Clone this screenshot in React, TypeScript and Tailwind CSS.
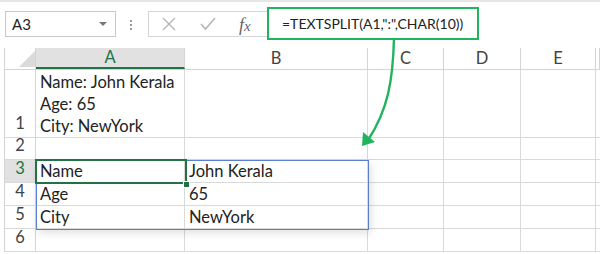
import React from 'react';

const COLS = [
  { id: 'A', w: 149 },
  { id: 'B', w: 183 },
  { id: 'C', w: 76 },
  { id: 'D', w: 77 },
  { id: 'E', w: 75 },
  { id: '', w: 4 },
];

const ROWS: { n: string; h: number; a?: React.ReactNode; b?: string }[] = [
  {
    n: '1',
    h: 68,
    a: (
      <div className="flex flex-col leading-[22px]">
        <span>Name: John Kerala</span>
        <span>Age: 65</span>
        <span>City: NewYork</span>
      </div>
    ),
  },
  { n: '2', h: 22 },
  { n: '3', h: 23, a: 'Name', b: 'John Kerala' },
  { n: '4', h: 23, a: 'Age', b: '65' },
  { n: '5', h: 23, a: 'City', b: 'NewYork' },
  { n: '6', h: 23 },
];

const cellFont = { fontFamily: 'Lato, "Open Sans", sans-serif' };

function FormulaBar() {
  return (
    <div className="relative h-[48px] border-t-[2px] border-[#e6e6e6] bg-white">
      {/* name box */}
      <div className="absolute left-[5px] top-[9px] w-[111px] h-[26px] border border-[#c8c8c8] flex items-center pl-[6px] text-[15px] text-[#222]" style={cellFont}>
        A3
        <span className="absolute right-[8px] top-[10px] w-0 h-0 border-l-[4px] border-r-[4px] border-t-[4px] border-l-transparent border-r-transparent border-t-[#777]" />
      </div>
      {/* dots */}
      <div className="absolute left-[130px] top-[18px] flex flex-col gap-[2px]">
        <span className="w-[2px] h-[2px] bg-[#999]" />
        <span className="w-[2px] h-[2px] bg-[#999]" />
        <span className="w-[2px] h-[2px] bg-[#999]" />
      </div>
      {/* icons box */}
      <div className="absolute left-[148px] top-[9px] w-[130px] h-[26px] border border-[#d6d6d6] flex items-center">
        <svg className="absolute left-[13px] top-[5px]" width="14" height="14" viewBox="0 0 14 14">
          <path d="M1 1 L13 13 M13 1 L1 13" stroke="#b4b4b4" strokeWidth="1.3" fill="none" />
        </svg>
        <svg className="absolute left-[51px] top-[5px]" width="16" height="14" viewBox="0 0 16 14">
          <path d="M1 7 L5.5 12 L15 1" stroke="#b4b4b4" strokeWidth="1.5" fill="none" />
        </svg>
        <span className="absolute left-[90px] top-0 text-[18px] italic text-[#666]" style={{ fontFamily: '"Liberation Serif", serif' }}>
          f<span className="text-[15px]">x</span>
        </span>
      </div>
      {/* formula text */}
      <div className="absolute left-[267px] top-[5px] w-[212px] h-[33px] border-[2px] border-[#22b35e] bg-white flex items-center pl-[13px] text-[14px] text-[#222]" style={cellFont}>
        =TEXTSPLIT(A1,":",CHAR(10))
      </div>
    </div>
  );
}

function Grid() {
  return (
    <div className="ml-[4px] border-l border-[#d4d4d4]" style={cellFont}>
      {/* header row */}
      <div className="flex h-[22px] border-b border-[#d4d4d4]">
        <div className="w-[31px] shrink-0 relative border-r border-[#d4d4d4]">
          <svg className="absolute left-[14px] top-[3px]" width="16" height="16" viewBox="0 0 16 16">
            <polygon points="16,0 16,16 0,16" fill="#dadada" />
          </svg>
        </div>
        {COLS.map((c) => (
          <div
            key={c.id + c.w}
            className={`shrink-0 flex items-center justify-center text-[16.5px] border-r border-[#d4d4d4] ${
              c.id === 'A' ? 'bg-[#e1e1e1] text-[#217346] border-b-[2px] border-b-[#217346]' : 'text-[#444]'
            }`}
            style={{ width: c.w }}
          >
            {c.id}
          </div>
        ))}
      </div>
      {ROWS.map((r) => (
        <div key={r.n} className="flex border-b border-[#d9d9d9]" style={{ height: r.h }}>
          <div
            className={`w-[31px] shrink-0 flex items-end justify-center pb-[1px] text-[16.5px] border-r border-[#d4d4d4] ${
              r.n === '3' ? 'bg-[#e1e1e1] text-[#217346]' : 'text-[#444]'
            }`}
          >
            {r.n}
          </div>
          {COLS.map((c, i) => (
            <div
              key={c.id + c.w}
              className="shrink-0 flex items-end pl-[4px] pb-0 text-[16.5px] leading-[22px] text-[#222] border-r border-[#d9d9d9] whitespace-nowrap"
              style={{ width: c.w }}
            >
              {i === 0 ? r.a : i === 1 ? r.b : null}
            </div>
          ))}
        </div>
      ))}
    </div>
  );
}

export default function App() {
  return (
    <div className="relative w-[600px] h-[254px] bg-white overflow-hidden">
      <FormulaBar />
      <Grid />

      {/* spill range */}
      <div className="absolute left-[36px] top-[160px] w-[333px] h-[70px] border border-[#5b7fd0] shadow-[2px_3px_8px_rgba(0,0,0,0.12)] pointer-events-none" />
      {/* active cell */}
      <div className="absolute left-[35px] top-[159px] w-[152px] h-[25px] border-[2px] border-[#217346] pointer-events-none" />
      <div className="absolute left-[183px] top-[181px] w-[5px] h-[5px] bg-[#217346] border border-white box-content" />

      {/* arrow */}
      <svg className="absolute left-0 top-0 pointer-events-none" width="600" height="254" viewBox="0 0 600 254">
        <path d="M394 38 C393 80 388 110 368 140" stroke="#22b35e" strokeWidth="2.4" fill="none" />
        <polygon points="362,146 363,132 375,142" fill="#22b35e" />
      </svg>
    </div>
  );
}
